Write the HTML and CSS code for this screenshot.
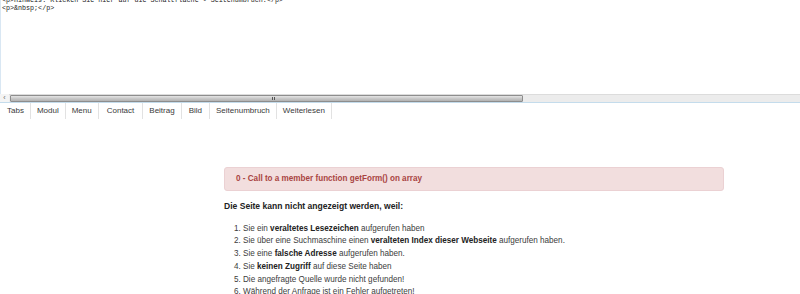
FILE: index.html
```html
<!DOCTYPE html>
<html>
<head>
<meta charset="utf-8">
<link rel="stylesheet" href="styles.css">
</head>
<body>
<div class="editor">
<pre class="code">&lt;p&gt;Hinweis: Klicken Sie hier auf die Schaltfl&auml;che - Seitenumbruch.&lt;/p&gt;
&lt;p&gt;&amp;nbsp;&lt;/p&gt;</pre>
</div>
<div class="hscroll">
  <div class="arrow">&#8249;</div>
  <div class="track">
    <div class="thumb"><span class="grip"></span></div>
  </div>
</div>
<div class="tabs">
  <div class="tab t-first">Tabs</div>
  <div class="tab">Modul</div>
  <div class="tab">Menu</div>
  <div class="tab t-wide4">Contact</div>
  <div class="tab">Beitrag</div>
  <div class="tab t-wide2">Bild</div>
  <div class="tab">Seitenumbruch</div>
  <div class="tab">Weiterlesen</div>
</div>
<div class="content">
  <div class="alert">0 - Call to a member function getForm() on array</div>
  <p class="lead">Die Seite kann nicht angezeigt werden, weil:</p>
  <ol class="reasons">
    <li>Sie ein <b>veraltetes Lesezeichen</b> aufgerufen haben</li>
    <li>Sie &uuml;ber eine Suchmaschine einen <b>veralteten Index dieser Webseite</b> aufgerufen haben.</li>
    <li>Sie eine <b>falsche Adresse</b> aufgerufen haben.</li>
    <li>Sie <b>keinen Zugriff</b> auf diese Seite haben</li>
    <li>Die angefragte Quelle wurde nicht gefunden!</li>
    <li>W&auml;hrend der Anfrage ist ein Fehler aufgetreten!</li>
  </ol>
</div>
</body>
</html>
```
FILE: styles.css
```css
html, body {
  margin: 0;
  padding: 0;
  background: #fff;
  overflow: hidden;
}
body {
  font-family: "Liberation Sans", Arial, sans-serif;
  color: #333;
}
.editor {
  height: 94px;
  border-left: 1px solid #d9e7f3;
  box-sizing: border-box;
  overflow: hidden;
}
.code {
  margin: -3px 0 0 1px;
  font-family: "Liberation Mono", "Courier New", monospace;
  font-size: 6.7px;
  line-height: 7.5px;
  color: #222;
}
.hscroll {
  display: flex;
  height: 8px;
  border-bottom: 1px solid #c4dcec;
  background: #ececec;
}
.arrow {
  width: 9px;
  font-size: 7px;
  line-height: 8px;
  text-align: center;
  color: #666;
  background: #f4f4f4;
}
.track {
  flex: 1;
  display: flex;
  border-top: 1px solid #dcdcdc;
  box-sizing: border-box;
}
.thumb {
  width: 513px;
  margin-left: 1px;
  box-sizing: border-box;
  border: 1px solid #8d8d8d;
  border-radius: 1px;
  background: linear-gradient(#e4e4e4, #c8c8c8 50%, #b2b2b2);
  display: flex;
  justify-content: center;
  align-items: center;
}
.grip {
  width: 3px;
  height: 3px;
  border-left: 1px solid #555;
  border-right: 1px solid #555;
  box-sizing: border-box;
  margin-left: 14px;
}
.tabs {
  display: flex;
  height: 16px;
  font-size: 8px;
  line-height: 16px;
  color: #3a3a3a;
}
.tab {
  padding: 0 6px;
  border-right: 1px solid #e2e2e2;
}
.tab.t-first {
  padding-left: 7px;
}
.tab.t-wide2 {
  padding: 0 7px;
}
.tab.t-wide4 {
  padding: 0 8px;
}
.content {
  width: 500px;
  margin: 48px 0 0 224px;
  font-size: 8.15px;
  line-height: 12.7px;
}
.alert {
  background: #f2dede;
  border: 1px solid #ebd1d3;
  border-radius: 3px;
  color: #a94442;
  font-weight: bold;
  height: 24px;
  box-sizing: border-box;
  padding: 0 0 0 11px;
  line-height: 22px;
}
.lead {
  font-weight: bold;
  font-size: 8.55px;
  margin: 9px 0 10px 0;
  color: #222;
}
.reasons {
  margin: 0;
  padding-left: 19px;
  color: #3c3c3c;
}
.reasons b {
  color: #222;
}
```
